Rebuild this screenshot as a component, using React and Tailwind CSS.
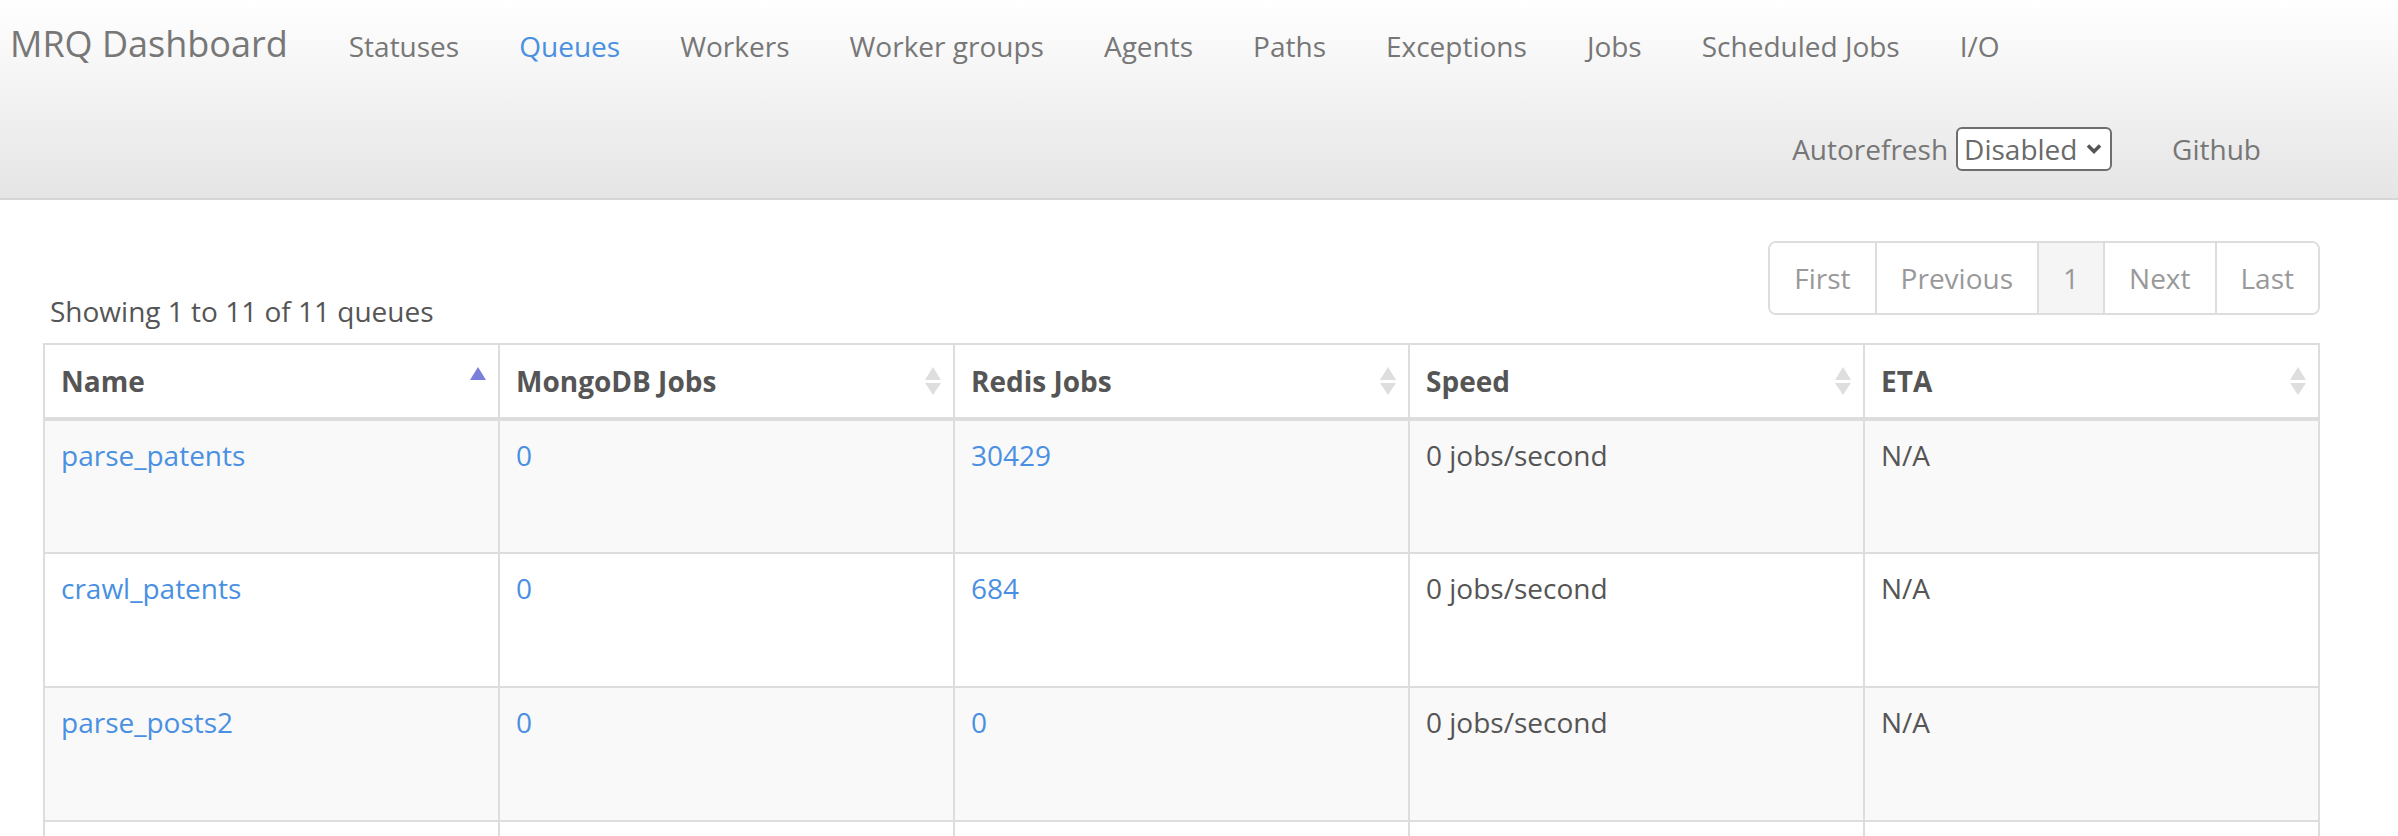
import React from "react";

const NAV = [
  "Statuses",
  "Queues",
  "Workers",
  "Worker groups",
  "Agents",
  "Paths",
  "Exceptions",
  "Jobs",
  "Scheduled Jobs",
  "I/O",
];

const COLUMNS = ["Name", "MongoDB Jobs", "Redis Jobs", "Speed", "ETA"];

const QUEUES = [
  { name: "parse_patents", mongo: "0", redis: "30429", speed: "0 jobs/second", eta: "N/A" },
  { name: "crawl_patents", mongo: "0", redis: "684", speed: "0 jobs/second", eta: "N/A" },
  { name: "parse_posts2", mongo: "0", redis: "0", speed: "0 jobs/second", eta: "N/A" },
];

function SortIcon({ active }) {
  return (
    <svg width="16" height="30" viewBox="0 0 16 30" className="shrink-0">
      <path d="M8 1 L16 14 L0 14 Z" fill={active ? "#7b7fdc" : "#dedede"} />
      {!active && <path d="M0 17 L16 17 L8 29 Z" fill="#dedede" />}
    </svg>
  );
}

function Navbar() {
  return (
    <div className="h-[200px] border-b-2 border-[#d6d6d6] bg-linear-to-b from-white to-[#e5e5e5] text-[#777]">
      <div className="flex h-[100px] items-baseline pt-[24px]">
        <a className="pl-[10px] pr-[31px] text-[36px] leading-[40px]">MRQ Dashboard</a>
        {NAV.map((item) => (
          <a
            key={item}
            className={
              "px-[30px] text-[28px] leading-[40px] " +
              (item === "Queues" ? "text-[#4a90e2]" : "text-[#777]")
            }
          >
            {item}
          </a>
        ))}
      </div>
      <div className="flex h-[98px] items-center justify-end pr-[107px] text-[28px] leading-[40px]">
        <span>Autorefresh</span>
        <div className="ml-[8px] mr-[30px] flex h-[44px] w-[156px] items-center justify-between rounded-[6px] border-2 border-[#6e6e6e] bg-white pl-[6px] pr-[8px] text-[#6a6a6a]">
          <span>Disabled</span>
          <svg width="16" height="12" viewBox="0 0 16 12">
            <path d="M2 2.5 L8 8.5 L14 2.5" fill="none" stroke="#555" strokeWidth="3.5" />
          </svg>
        </div>
        <a className="px-[30px]">Github</a>
      </div>
    </div>
  );
}

function Pagination() {
  const items = ["First", "Previous", "1", "Next", "Last"];
  return (
    <div className="flex overflow-hidden rounded-[8px] border-2 border-[#ddd]">
      {items.map((p, i) => (
        <span
          key={p}
          className={
            "px-[24px] py-[15px] text-[28px] leading-[40px] text-[#999] " +
            (i > 0 ? "border-l-2 border-[#ddd] " : "") +
            (p === "1" ? "bg-[#f5f5f5]" : "bg-white")
          }
        >
          {p}
        </span>
      ))}
    </div>
  );
}

export default function App() {
  return (
    <div className="min-h-screen bg-white font-['Open_Sans',sans-serif] text-[28px] leading-[40px] text-[#555]">
      <Navbar />
      <div className="pl-[43px] pr-[78px] pt-[41px]">
        <div className="flex items-start justify-between">
          <div className="pl-[7px] pt-[50px]">Showing 1 to 11 of 11 queues</div>
          <Pagination />
        </div>
        <table className="mt-[12px] w-full table-fixed border-collapse border-2 border-[#ddd]">
          <thead>
            <tr>
              {COLUMNS.map((col) => (
                <th
                  key={col}
                  className="border-2 border-b-4 border-[#ddd] bg-white py-[16px] pl-[16px] pr-[12px] text-left font-bold"
                >
                  <div className="flex items-center justify-between">
                    <span>{col}</span>
                    <SortIcon active={col === "Name"} />
                  </div>
                </th>
              ))}
            </tr>
          </thead>
          <tbody>
            {QUEUES.map((q, i) => (
              <tr key={q.name} className={i % 2 === 0 ? "bg-[#f9f9f9]" : "bg-white"}>
                <td className="h-[134px] border-2 border-[#ddd] px-[16px] pt-[14px] align-top">
                  <a className="text-[#4a90e2]">{q.name}</a>
                </td>
                <td className="border-2 border-[#ddd] px-[16px] pt-[14px] align-top">
                  <a className="text-[#4a90e2]">{q.mongo}</a>
                </td>
                <td className="border-2 border-[#ddd] px-[16px] pt-[14px] align-top">
                  <a className="text-[#4a90e2]">{q.redis}</a>
                </td>
                <td className="border-2 border-[#ddd] px-[16px] pt-[14px] align-top">{q.speed}</td>
                <td className="border-2 border-[#ddd] px-[16px] pt-[14px] align-top">{q.eta}</td>
              </tr>
            ))}
            <tr className="bg-white">
              {COLUMNS.map((col) => (
                <td key={col} className="h-[134px] border-2 border-[#ddd] px-[16px]"></td>
              ))}
            </tr>
          </tbody>
        </table>
      </div>
    </div>
  );
}
